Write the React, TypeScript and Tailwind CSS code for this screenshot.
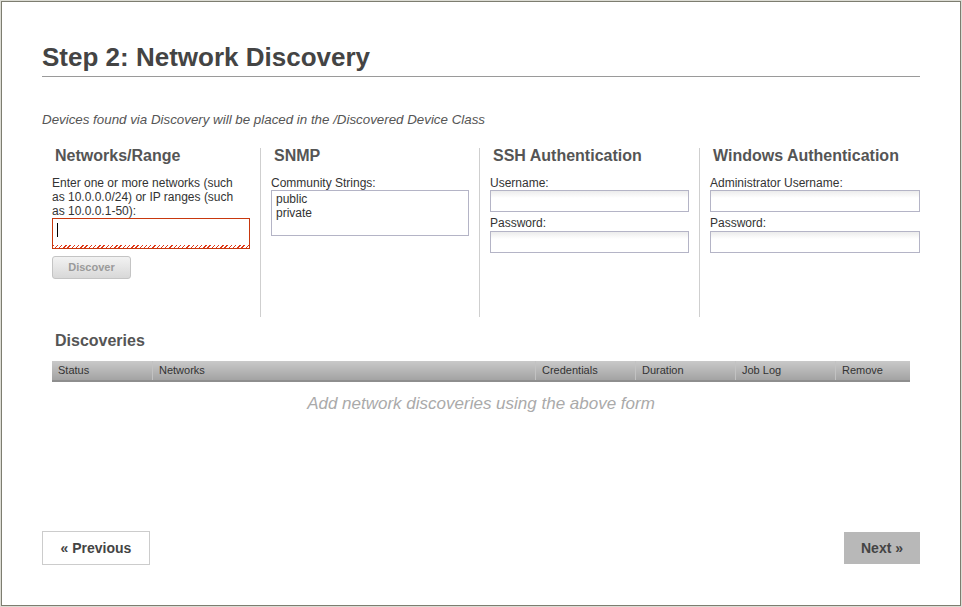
import React from "react";

const font = "font-['Liberation_Sans',Arial,sans-serif]";

const inputClass =
  "block w-full border border-[#b4b4c6] bg-[linear-gradient(#ececec_0px,#ffffff_7px)]";

function ColumnHeader({ children }: { children: React.ReactNode }) {
  return (
    <h3 className="pl-[13px] text-[16px] font-bold leading-[16px] text-[#555]">
      {children}
    </h3>
  );
}

function Label({ children }: { children: React.ReactNode }) {
  return <div className="text-[12px] leading-[14px] text-[#333]">{children}</div>;
}

export default function App() {
  const cols = [
    { name: "Status", w: "w-[100px]" },
    { name: "Networks", w: "w-[383px]" },
    { name: "Credentials", w: "w-[100px]" },
    { name: "Duration", w: "w-[100px]" },
    { name: "Job Log", w: "w-[100px]" },
    { name: "Remove", w: "w-[75px]" },
  ];

  return (
    <div className={`h-[607px] w-[962px] border border-[#dcdcd4] bg-white ${font}`}>
      <div className="flex h-full flex-col border border-[#7d7d70] px-[40px]">
        {/* title */}
        <div className="mt-[40px] border-b border-[#9a9a9a] pb-[4px]">
          <h1 className="text-[26px] font-bold leading-[30px] text-[#444]">
            Step 2: Network Discovery
          </h1>
        </div>

        <p className="mt-[35px] text-[13.33px] italic leading-[16px] text-[#555]">
          Devices found via Discovery will be placed in the /Discovered Device Class
        </p>

        {/* form columns */}
        <div className="mt-[20px] grid h-[169px] grid-cols-[218px_219px_220px_1fr]">
          <div>
            <ColumnHeader>Networks/Range</ColumnHeader>
            <div className="mt-[12px] pl-[10px]">
              <div className="w-[190px]">
                <Label>
                  Enter one or more networks (such as 10.0.0.0/24) or IP ranges (such
                  as 10.0.0.1-50):
                </Label>
              </div>
              <div className="relative h-[31px] w-[198px] border border-[#c8380e] bg-white">
                <span className="absolute left-[4px] top-[4px] h-[14px] w-[1px] bg-black" />
                <span className="absolute bottom-0 left-0 right-0 h-[3px] bg-[repeating-linear-gradient(135deg,#e03a1a_0px,#e03a1a_1px,transparent_1px,transparent_3px)]" />
              </div>
              <button
                type="button"
                className="mt-[7px] h-[23px] w-[79px] rounded-[3px] border border-[#c4c4c4] bg-[linear-gradient(#f2f2f2,#d8d8d8)] text-[11px] font-bold text-[#9a9a9a]"
              >
                Discover
              </button>
            </div>
          </div>

          <div className="border-l border-[#cfcfcf]">
            <ColumnHeader>SNMP</ColumnHeader>
            <div className="mt-[12px] pl-[10px] pr-[10px]">
              <Label>Community Strings:</Label>
              <div className="h-[46px] w-[198px] border border-[#b4b4c6] px-[4px] pt-[1px] text-[12px] leading-[14px] text-[#333]">
                <div>public</div>
                <div>private</div>
              </div>
            </div>
          </div>

          <div className="border-l border-[#cfcfcf]">
            <ColumnHeader>SSH Authentication</ColumnHeader>
            <div className="mt-[12px] pl-[10px] pr-[10px]">
              <Label>Username:</Label>
              <div className={`${inputClass} h-[22px] w-[199px]`} />
              <div className="mt-[4px]">
                <Label>Password:</Label>
              </div>
              <div className={`${inputClass} mt-[1px] h-[22px] w-[199px]`} />
            </div>
          </div>

          <div className="border-l border-[#cfcfcf]">
            <ColumnHeader>Windows Authentication</ColumnHeader>
            <div className="mt-[12px] pl-[10px]">
              <Label>Administrator Username:</Label>
              <div className={`${inputClass} h-[22px] w-[210px]`} />
              <div className="mt-[4px]">
                <Label>Password:</Label>
              </div>
              <div className={`${inputClass} mt-[1px] h-[22px] w-[210px]`} />
            </div>
          </div>
        </div>

        {/* discoveries */}
        <div className="mt-[16px]">
          <ColumnHeader>Discoveries</ColumnHeader>
          <div className="ml-[10px] mt-[12px] flex h-[21px] w-[858px] border-b-2 border-[#8e8e8e] bg-[linear-gradient(#c9c9c9,#a3a3a3)]">
            {cols.map((c, i) => (
              <div
                key={c.name}
                className={`${c.w} flex items-center pl-[6px] text-[11px] text-[#333] ${
                  i > 0 ? "border-l border-[#c2c2c2]" : ""
                }`}
              >
                {c.name}
              </div>
            ))}
          </div>
          <p className="mt-[12px] text-center text-[17px] italic leading-[20px] text-[#aaa]">
            Add network discoveries using the above form
          </p>
        </div>

        {/* footer buttons */}
        <div className="mb-[40px] mt-auto flex items-center justify-between">
          <button
            type="button"
            className="h-[34px] w-[108px] border border-[#cccccc] bg-white text-[14px] font-bold text-[#444]"
          >
            « Previous
          </button>
          <button
            type="button"
            className="h-[32px] w-[76px] bg-[#b8b8b8] text-[14px] font-bold text-[#444]"
          >
            Next »
          </button>
        </div>
      </div>
    </div>
  );
}
